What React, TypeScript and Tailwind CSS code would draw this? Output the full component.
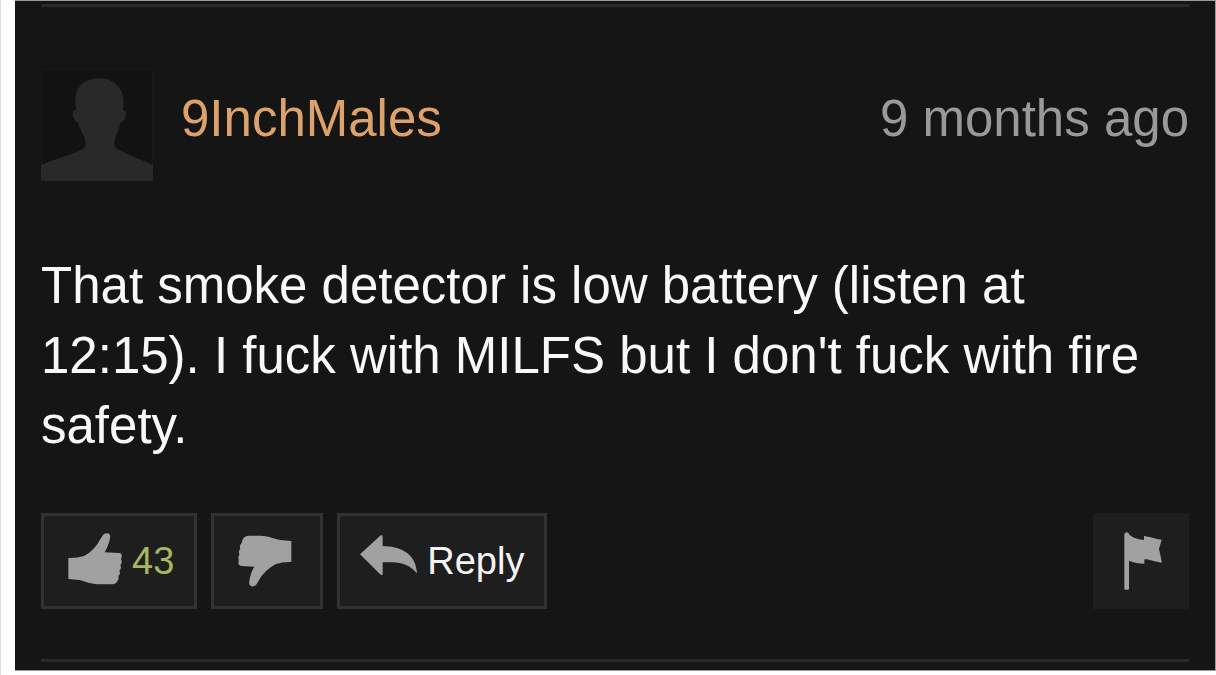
import type { ReactNode } from "react";

function Avatar() {
  return (
    <svg viewBox="0 0 336 336" className="size-28 shrink-0" role="img" aria-label="User avatar">
      <rect x="2" y="2" width="332" height="332" fill="#121212" stroke="#191919" strokeWidth="4" />
      <path
        fill="#292929"
        d="M0 336V289C40 270 90 258 126 240C136 233 134 218 130 204C122 188 114 175 110 159C100 156 93 140 96 128C97 123 103 122 105 124C102 100 102 76 112 58C125 38 148 28 174 28C200 28 224 40 238 60C248 78 249 100 246 124C253 123 256 128 255 137C253 148 249 159 239 160C236 178 228 190 223 204C218 220 219 232 229 240C260 258 305 272 336 289V336Z"
      />
    </svg>
  );
}

function ThumbUp() {
  return (
    <svg viewBox="113 95 162 156" className="mb-1 h-[52px] w-[54px]" fill="#a1a1a1" aria-hidden="true">
      <path d="M114 170Q139 171 161 164C177 157 198 137 206 120L218 101Q223 94 233 96Q242 99 239 110C237 125 230 141 223 153L266 155Q276 156 274 167L272 174Q277 184 270 192Q275 201 267 208Q272 217 264 224Q267 233 260 241Q255 249 242 249H210C180 249 165 240 147 236L114 233Z" />
    </svg>
  );
}

function ThumbDown() {
  return (
    <svg viewBox="112 102 162 156" className="h-[52px] w-[54px]" fill="#a1a1a1" aria-hidden="true">
      <path d="M272 120V183Q246 182 226 189C208 198 190 215 180 229L168 249Q162 258 152 256Q143 252 146 240C148 225 153 210 161 197L124 195Q112 194 113 183L115 177Q110 169 117 160Q111 151 119 144Q115 134 123 126Q125 107 142 104H178C202 104 220 113 238 117Z" />
    </svg>
  );
}

function ReplyArrow() {
  return (
    <svg viewBox="95 105 171 120" className="mb-3 h-10 w-[57px]" fill="#a1a1a1" aria-hidden="true">
      <path d="M95 163L158 105Q163 105 163 110V138C212 139 263 157 266 220C247 198 222 187 192 187H163V221Q163 226 158 225Z" />
    </svg>
  );
}

function Flag() {
  return (
    <svg viewBox="135 98 114 174" className="h-[58px] w-[38px]" fill="#a1a1a1" aria-hidden="true">
      <path d="M136 104Q138 99 144 99Q149 100 151 106C163 116 180 121 195 122V110C211 111 230 120 248 121L240 148L249 190C228 188 214 180 196 180V193C180 193 163 190 150 184V268Q150 271 146 271H139Q136 271 136 268Z" />
    </svg>
  );
}

function ActionButton({ label, className, children }: { label: string; className: string; children: ReactNode }) {
  return (
    <button
      type="button"
      aria-label={label}
      className={`flex h-24 cursor-pointer items-center border-[3px] bg-[#1e1e1e] ${className}`}
    >
      {children}
    </button>
  );
}

export default function App() {
  return (
    <main className="border-l border-[#dedede] bg-white pb-1 pl-[14px] font-['Liberation_Sans',Arial,sans-serif]">
      <article className="border-y border-r border-[#999b9a] bg-[#151515] px-[26px] pt-[3px] pb-2">
        <div className="border-y-[3px] border-[#292929] pt-[62px] pb-[50px]">
          <header className="flex items-center justify-between">
            <div className="flex items-center gap-7">
              <Avatar />
              <a href="#profile" className="pb-3 text-[51px] leading-[56px] text-[#dda26b]">
                9InchMales
              </a>
            </div>
            <time className="pb-3 text-[51px] leading-[56px] text-[#999999]">9 months ago</time>
          </header>
          <p className="mt-[70px] text-[51px] leading-[70px] text-[#f8f8f8]">
            That smoke detector is low battery (listen at 12:15). I fuck with MILFS but I don't fuck with fire safety.
          </p>
          <footer className="mt-[52px] flex items-center gap-[14px]">
            <ActionButton label="Like, 43 votes" className="gap-[10px] border-[#323232] pr-5 pl-6">
              <ThumbUp />
              <span className="text-[38px] leading-[48px] text-[#a9b55f]">43</span>
            </ActionButton>
            <ActionButton label="Dislike" className="border-[#323232] pr-7 pl-6">
              <ThumbDown />
            </ActionButton>
            <ActionButton label="Reply" className="gap-[10px] border-[#323232] px-5">
              <ReplyArrow />
              <span className="text-[38px] leading-[48px] text-[#f4f4f4]">Reply</span>
            </ActionButton>
            <ActionButton label="Report comment" className="ml-auto border-[#1e1e1e] pr-6 pl-7">
              <Flag />
            </ActionButton>
          </footer>
        </div>
      </article>
    </main>
  );
}
